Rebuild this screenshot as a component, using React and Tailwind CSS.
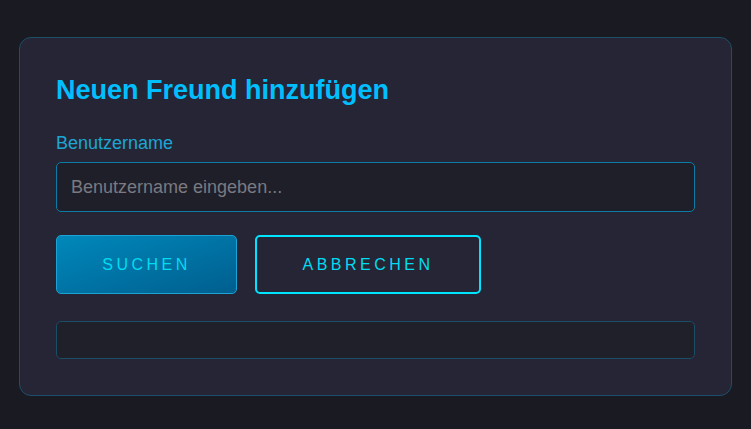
export default function App() {
  return (
    <div className="w-[751px] h-[429px] bg-[#1a1a23] pt-[37px] pl-[19px] font-['Liberation_Sans',Arial,sans-serif]">
      <div className="w-[713px] rounded-[12px] border border-[#1d4f6a] bg-[#252535] p-[36px]">
        <h2 className="text-[27px] leading-[32px] font-bold text-[#00bfff]">Neuen Freund hinzufügen</h2>
        <div className="mt-[26px] text-[18px] leading-[22px] text-[#1ca6d6]">Benutzername</div>
        <input
          className="mt-[8px] block w-full h-[50px] rounded-[5px] border border-[#0b7ca6] bg-[#1f1f2a] px-[14px] text-[18px] text-[#cccccc] placeholder:text-[#7a7a80] outline-none"
          placeholder="Benutzername eingeben..."
        />
        <div className="mt-[23px] flex gap-[18px]">
          <button className="w-[181px] h-[59px] rounded-[5px] border border-[#1aa3d4] bg-linear-to-br from-[#0088bb] to-[#005f8f] text-[16px] tracking-[3.5px] text-[#00dcf2]">
            SUCHEN
          </button>
          <button className="w-[226px] h-[59px] rounded-[5px] border-2 border-[#00e5ff] bg-transparent text-[16px] tracking-[3.5px] text-[#00dcf2]">
            ABBRECHEN
          </button>
        </div>
        <div className="mt-[27px] h-[38px] rounded-[5px] border border-[#1a4d68] bg-[#20202b]"></div>
      </div>
    </div>
  );
}
